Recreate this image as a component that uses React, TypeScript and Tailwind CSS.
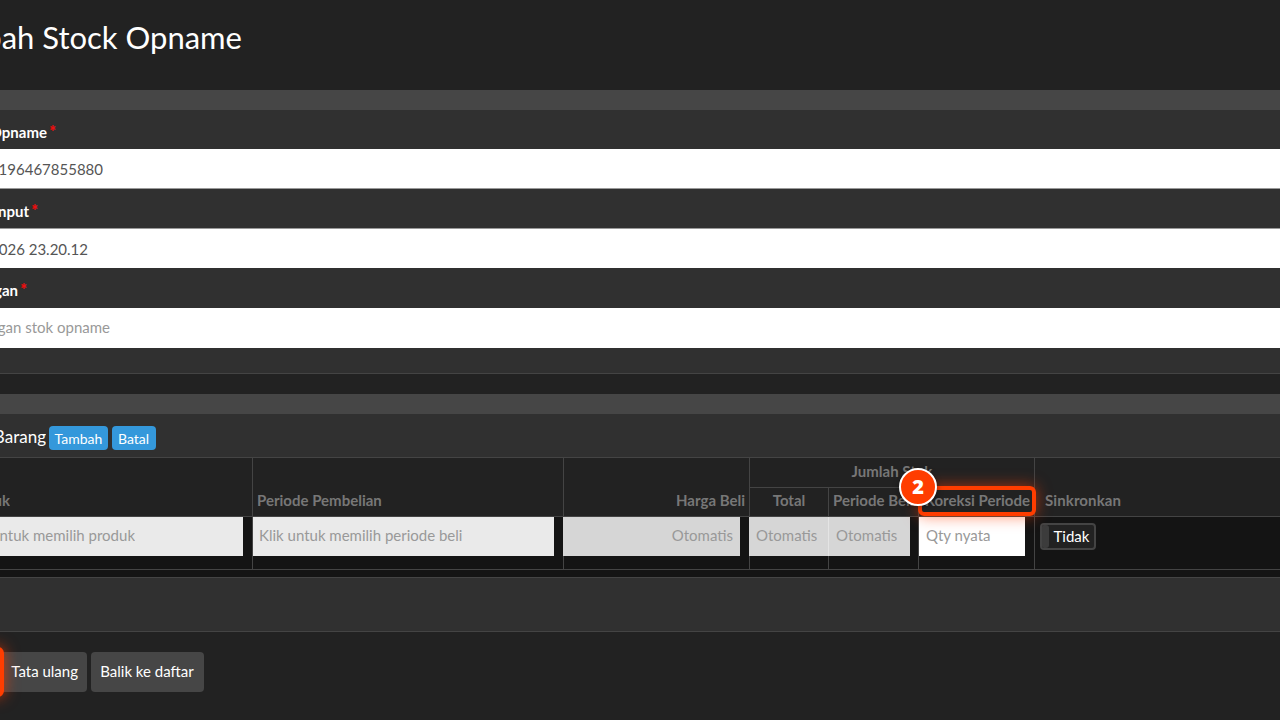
import type { ReactNode } from "react";

function Clipped({ children, className }: { children: ReactNode; className: string }) {
  return (
    <div className={`flex shrink-0 justify-end overflow-hidden whitespace-nowrap ${className}`}>
      <span>{children}</span>
    </div>
  );
}

function Label({ text, className }: { text: string; className: string }) {
  return (
    <div className="flex h-[38px] items-center pt-[6px] font-bold text-white">
      <Clipped className={className}>
        {text} <span className="-ml-[1.5px] inline-block text-[16px] font-black leading-none text-[#f00d0d]">*</span>
      </Clipped>
    </div>
  );
}

function Placeholder({ children, className }: { children: ReactNode; className: string }) {
  return <div className={`flex h-[39px] items-center overflow-hidden whitespace-nowrap pb-[2px] text-[#999] ${className}`}>{children}</div>;
}

export default function App() {
  return (
    <div className="relative flex h-[720px] w-[1280px] flex-col overflow-hidden bg-[#222] font-['Lato',sans-serif] text-[15px] leading-[21px]">
      <header className="flex h-[90px] shrink-0 items-start pt-[18px] text-[31px] leading-[38px] text-white">
        <Clipped className="w-[242px]">Tambah Stock Opname</Clipped>
      </header>

      <section className="h-[284px] shrink-0 border-b border-[#444] bg-[#303030]">
        <div className="h-5 bg-[#464646]" />
        <Label text="Nomor Opname" className="w-[56px]" />
        <div className="mt-px flex h-10 items-center border-b border-[#999] bg-white pt-px text-[#555]">
          <Clipped className="w-[103px]">SO1196467855880</Clipped>
        </div>
        <Label text="Tanggal Input" className="w-[38px]" />
        <div className="mt-px flex h-10 items-center border-t border-[#999] bg-white pt-[2px] text-[#555]">
          <Clipped className="w-[88px]">01/01/2026 23.20.12</Clipped>
        </div>
        <Label text="Keterangan" className="w-[27px]" />
        <div className="mt-[2px] flex h-10 items-center bg-white pb-[2px] text-[#999]">
          <Clipped className="w-[110px]">Keterangan stok opname</Clipped>
        </div>
      </section>

      <section className="mt-5 h-[238px] shrink-0 border-b border-[#444] bg-[#303030]">
        <div className="h-5 bg-[#464646]" />
        <div className="flex h-[43px] items-center text-white">
          <Clipped className="mr-[3px] mt-px w-[46px] text-[17px]">Daftar Barang</Clipped>
          <button className="mr-1 mt-[5px] flex h-6 w-[59px] items-center justify-center rounded-[4px] bg-[#3498db] pt-px text-sm">Tambah</button>
          <button className="mt-[5px] flex h-6 w-[44px] items-center justify-center rounded-[4px] bg-[#3498db] pr-px pt-px text-sm">Batal</button>
        </div>

        <div className="border-y border-[#444] bg-[#222] font-bold text-[#777]">
          <div className="flex h-[58px]">
            <div className="flex w-[253px] items-end border-r border-[#444] pb-[5px]">
              <Clipped className="w-[10px]">Produk</Clipped>
            </div>
            <div className="flex w-[311px] items-end border-r border-[#444] pb-[5px] pl-1">Periode Pembelian</div>
            <div className="flex w-[186px] items-end justify-end border-r border-[#444] pb-[5px] pr-1">Harga Beli</div>
            <div className="w-[285px] border-r border-[#444]">
              <div className="flex h-[30px] items-center justify-center border-b border-[#444] pb-[3px]">Jumlah Stok</div>
              <div className="flex h-7 whitespace-nowrap">
                <div className="flex w-[79px] items-center justify-center border-r border-[#444] pb-[3px]">Total</div>
                <div className="flex w-[90px] items-center overflow-hidden border-r border-[#444] pb-[3px] pl-1">Periode Beli</div>
                <div className="flex flex-1 items-center justify-end pb-[3px] pr-1">Koreksi Periode</div>
              </div>
            </div>
            <div className="flex flex-1 items-end pb-[5px] pl-[10px] tracking-[0.1px]">Sinkronkan</div>
          </div>
        </div>

        <div className="flex h-[53px] border-b border-[#444] bg-[#141414]">
          <div className="w-[253px] border-r border-[#444]">
            <Placeholder className="w-[243px] bg-[#eaeaea]">
              <Clipped className="w-[135px]">Klik untuk memilih produk</Clipped>
            </Placeholder>
          </div>
          <div className="w-[311px] border-r border-[#444]">
            <Placeholder className="w-[301px] bg-[#eaeaea] pl-[6px]">Klik untuk memilih periode beli</Placeholder>
          </div>
          <div className="w-[186px] border-r border-[#444]">
            <Placeholder className="-ml-px w-[177px] justify-end bg-[#d6d6d6] pr-[7px]">Otomatis</Placeholder>
          </div>
          <div className="w-[79px] border-r border-[#444]">
            <Placeholder className="-ml-px w-[79px] bg-[#d6d6d6] pl-[7px]">Otomatis</Placeholder>
          </div>
          <div className="w-[90px] border-r border-[#444]">
            <Placeholder className="-ml-px w-[82px] border-l border-[#e4e4e4] bg-[#d6d6d6] pl-[7px]">Otomatis</Placeholder>
          </div>
          <div className="w-[116px] border-r border-[#444]">
            <Placeholder className="w-[106px] bg-white pl-[7px]">Qty nyata</Placeholder>
          </div>
          <div className="pl-[5px] pt-[6px]">
            <div className="flex h-[27px] w-[56px] overflow-hidden rounded border-2 border-[#444] bg-[#222] text-white">
              <div className="h-full w-[7px] rounded-r-[3px] bg-[#3c3c3c]" />
              <div className="flex flex-1 items-center justify-center">Tidak</div>
            </div>
          </div>
        </div>
        <div className="h-[7px] bg-[#141414]" />
        <div className="h-px bg-[#444]" />
      </section>

      <footer className="flex gap-1 pt-5 text-white">
        <button className="flex h-10 w-[87px] items-center justify-end rounded-[4px] bg-[#464646] pb-[2px] pr-[9px]">Tata ulang</button>
        <button className="flex h-10 w-[113px] items-center justify-center rounded-[4px] bg-[#464646] pb-[2px] pr-px">Balik ke daftar</button>
      </footer>

      <div className="absolute left-[918px] top-[486px] h-[30px] w-[118px] rounded-[6px] border-4 border-[#ff3d00] shadow-[0_0_15px_rgba(255,61,0,0.6)]" />
      <div className="absolute left-[899px] top-[467.5px] flex h-[38px] w-[38px] items-center justify-center rounded-full border-[2.5px] border-white bg-[#ff3d00] font-['Noto_Sans',sans-serif] text-[20px] font-black text-white shadow-[0_2px_6px_rgba(0,0,0,0.4)]">
        2
      </div>
      <div className="absolute -left-[80px] top-[647px] h-[50px] w-[84px] rounded-[6px] border-4 border-[#ff3d00] shadow-[0_0_15px_rgba(255,61,0,0.7)]" />
    </div>
  );
}
